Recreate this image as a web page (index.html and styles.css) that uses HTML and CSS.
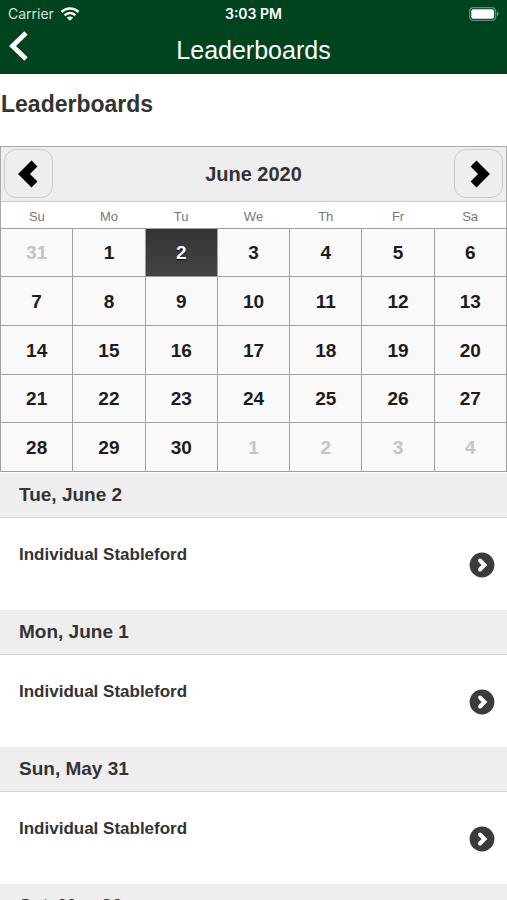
FILE: index.html
```html
<!DOCTYPE html>
<html lang="en">
<head>
    <meta charset="UTF-8">
    <meta name="viewport" content="width=device-width, initial-scale=1.0">
    <title>Leaderboards</title>
    <link rel="stylesheet" href="styles.css">
</head>
<body>
    <header class="header">
        <div class="status">
            <div class="carrier">
                <span>Carrier</span>
                <svg width="20" height="14" viewBox="0 0 20 14" fill="none" stroke="#fff" stroke-width="2.5">
                    <path d="M1.500 5a12 12 0 0 1 17 0"/>
                    <path d="M4.600 8.300a7.700 7.700 0 0 1 10.800 0"/>
                    <path d="M10 13.8L6.900 10.800a4.400 4.400 0 0 1 6.200 0z" fill="#fff" stroke="none"/>
                </svg>
            </div>
            <div class="time">3:03 PM</div>
            <div class="battery">
                <svg width="30" height="14" viewBox="0 0 30 14">
                    <rect x="0.7" y="0.7" width="26" height="12.6" rx="3.6" fill="none" stroke="#fff" stroke-opacity=".4" stroke-width="1.3"/>
                    <rect x="2.3" y="2.3" width="22.8" height="9.4" rx="2" fill="#fff"/>
                    <path d="M28 4.8c2 .7 2 3.7 0 4.4z" fill="#fff" fill-opacity=".45"/>
                </svg>
            </div>
        </div>
        <div class="nav">
            <a href="#" class="back" aria-label="Back">
                <svg width="20" height="30" viewBox="0 0 20 30" fill="none" stroke="#fff" stroke-width="4.8">
                    <path d="M18 2L4.500 15L18 28"/>
                </svg>
            </a>
            <div class="title">Leaderboards</div>
        </div>
    </header>

    <h1>Leaderboards</h1>

    <div class="calendar">
        <div class="calendar-bar">
            <button class="month-btn" aria-label="Previous month">
                <svg width="22" height="28" viewBox="0 0 22 28" fill="none" stroke="#000" stroke-width="8.4" stroke-linejoin="miter">
                    <path d="M17.500 3.500L7 14l10.500 10.500"/>
                </svg>
            </button>
            <h2>June 2020</h2>
            <button class="month-btn next" aria-label="Next month">
                <svg width="22" height="28" viewBox="0 0 22 28" fill="none" stroke="#000" stroke-width="8.4" stroke-linejoin="miter">
                    <path d="M5.500 3.500L16 14L5.500 24.500"/>
                </svg>
            </button>
        </div>
        <table>
            <thead>
                <tr><th>Su</th><th>Mo</th><th>Tu</th><th>We</th><th>Th</th><th>Fr</th><th>Sa</th></tr>
            </thead>
            <tbody>
                <tr><td class="other">31</td><td>1</td><td class="selected">2</td><td>3</td><td>4</td><td>5</td><td>6</td></tr>
                <tr><td>7</td><td>8</td><td>9</td><td>10</td><td>11</td><td>12</td><td>13</td></tr>
                <tr><td>14</td><td>15</td><td>16</td><td>17</td><td>18</td><td>19</td><td>20</td></tr>
                <tr><td>21</td><td>22</td><td>23</td><td>24</td><td>25</td><td>26</td><td>27</td></tr>
                <tr><td>28</td><td>29</td><td>30</td><td class="other">1</td><td class="other">2</td><td class="other">3</td><td class="other">4</td></tr>
            </tbody>
        </table>
    </div>

    <div class="events">
        <h3>Tue, June 2</h3>
        <a href="#" class="event">
            <span>Individual Stableford</span>
            <svg width="26" height="26" viewBox="0 0 26 26">
                <circle cx="13" cy="13" r="12.4" fill="#3b3b3b"/>
                <path d="M11 8.500l4.500 4.500l-4.500 4.500" fill="none" stroke="#fff" stroke-width="4" stroke-linecap="round"/>
            </svg>
        </a>
        <h3>Mon, June 1</h3>
        <a href="#" class="event">
            <span>Individual Stableford</span>
            <svg width="26" height="26" viewBox="0 0 26 26">
                <circle cx="13" cy="13" r="12.4" fill="#3b3b3b"/>
                <path d="M11 8.500l4.500 4.500l-4.500 4.500" fill="none" stroke="#fff" stroke-width="4" stroke-linecap="round"/>
            </svg>
        </a>
        <h3>Sun, May 31</h3>
        <a href="#" class="event">
            <span>Individual Stableford</span>
            <svg width="26" height="26" viewBox="0 0 26 26">
                <circle cx="13" cy="13" r="12.4" fill="#3b3b3b"/>
                <path d="M11 8.500l4.500 4.500l-4.500 4.500" fill="none" stroke="#fff" stroke-width="4" stroke-linecap="round"/>
            </svg>
        </a>
        <h3>Sat, May 30</h3>
    </div>
</body>
</html>
```
FILE: styles.css
```css
* {
    box-sizing: border-box;
}
body {
    font-family: "Liberation Sans", Arial, sans-serif;
    margin: 0;
    background: #fff;
    color: #333;
}
h1, h2, h3 {
    margin: 0;
}
svg {
    display: block;
}
.header {
    background: #00431f;
    color: #fff;
}
.status {
    display: grid;
    grid-template-columns: 1fr auto 1fr;
    align-items: center;
    height: 27px;
    padding: 0 8px;
    font-family: Inter, sans-serif;
    font-size: 14px;
}
.carrier {
    display: flex;
    align-items: center;
    gap: 6px;
    color: #d5e3da;
}
.time {
    font-weight: 600;
}
.battery {
    justify-self: end;
}
.nav {
    display: grid;
    grid-template-columns: 40px 1fr 40px;
    height: 47px;
    padding: 0 8px;
}
.back {
    padding-top: 4px;
}
.title {
    font-size: 25px;
    line-height: 46px;
    text-align: center;
}
h1 {
    padding: 16px 1px 28px;
    font-size: 23px;
    line-height: 28px;
}
.calendar-bar {
    display: flex;
    align-items: center;
    justify-content: space-between;
    height: 56px;
    padding: 0 3px 1px;
    background: #eee;
    border: 1px solid #aaa;
    border-bottom-color: #ccc;
}
.calendar-bar h2 {
    font-size: 20px;
    line-height: 24px;
}
.month-btn {
    display: flex;
    align-items: center;
    justify-content: flex-start;
    width: 49px;
    height: 49px;
    padding: 0 12px;
    background: #eee;
    border: 1px solid #ccc;
    border-radius: 12px;
}
.month-btn.next {
    justify-content: flex-end;
}
table {
    width: 100%;
    height: 270px;
    table-layout: fixed;
    border-collapse: collapse;
    border: 1px solid #aaa;
    border-top: none;
}
th {
    height: 26px;
    padding: 3px 0 0;
    color: #777;
    font-size: 13px;
    font-weight: normal;
}
td {
    padding: 2px 0 0;
    background: #f9f9f9;
    border: 1px solid #a0a0a0;
    color: #1c1c1c;
    font-size: 19px;
    font-weight: bold;
    text-align: center;
}
td.other {
    color: #c4c4c4;
}
td.selected {
    background: linear-gradient(#333, #444);
    color: #fff;
    text-shadow: 0 1px 1px #000;
}
.events {
    padding-top: 1px;
}
.events h3 {
    height: 45px;
    padding-left: 19px;
    background: #eee;
    border-bottom: 1px solid #d6d6d6;
    font-size: 19px;
    line-height: 44px;
}
.event {
    display: flex;
    align-items: center;
    justify-content: space-between;
    height: 92px;
    padding: 2px 12px 0 19px;
    color: #333;
    text-decoration: none;
}
.event span {
    padding-bottom: 20px;
    font-size: 17px;
    font-weight: bold;
    line-height: 20px;
}
```
